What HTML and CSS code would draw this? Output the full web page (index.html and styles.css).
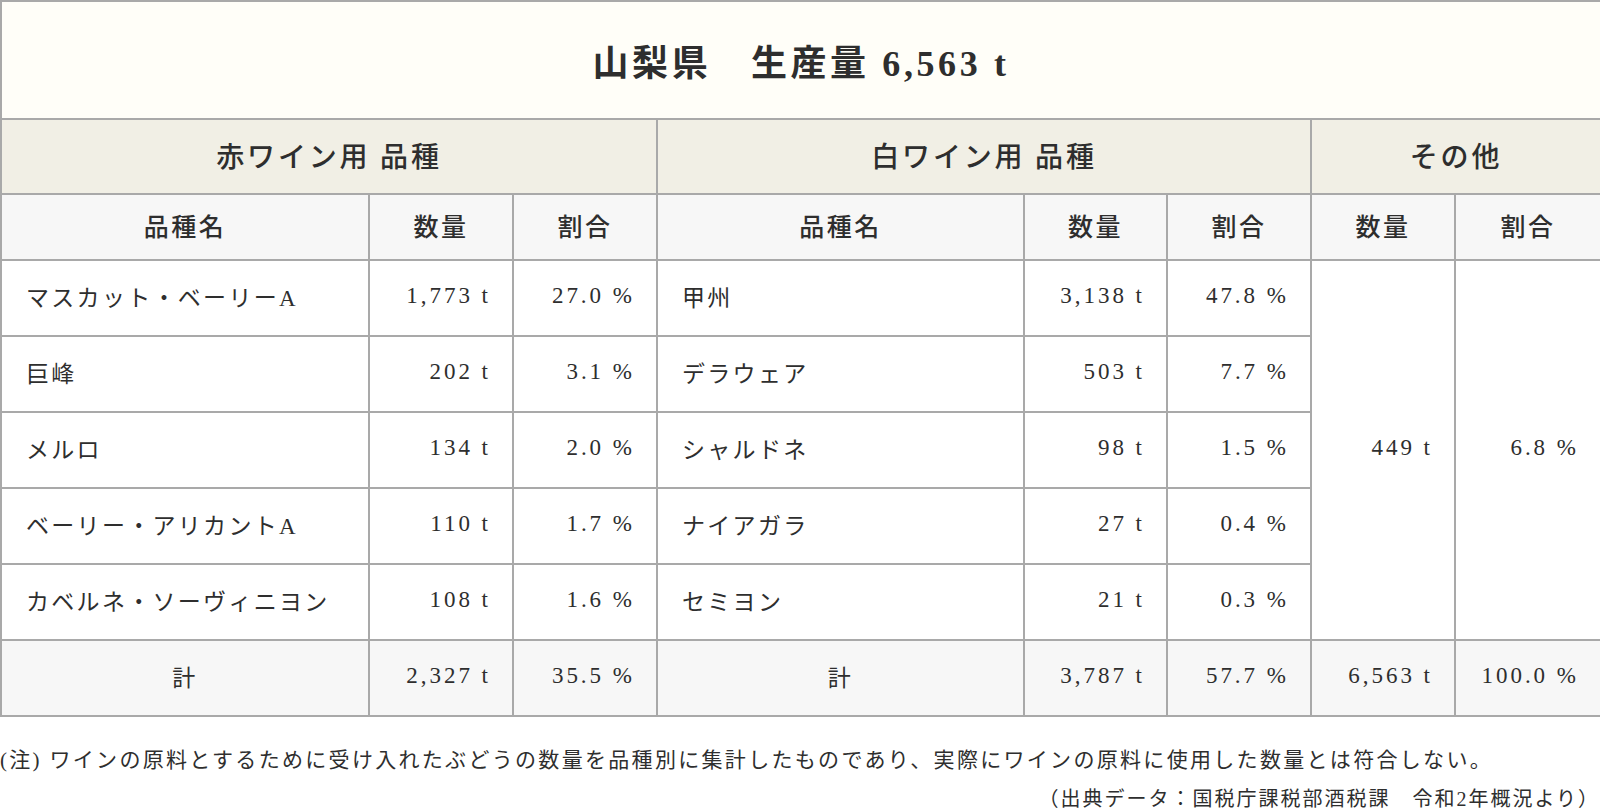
FILE: index.html
```html
<!DOCTYPE html>
<html lang="ja">
<head>
<meta charset="utf-8">
<title>山梨県 生産量</title>
<link rel="stylesheet" href="styles.css">
</head>
<body>
<table class="wine">
  <colgroup>
    <col class="c-name"><col class="c-num"><col class="c-num">
    <col class="c-name2"><col class="c-num2"><col class="c-num">
    <col class="c-num"><col class="c-last">
  </colgroup>
  <thead>
    <tr class="title-row"><th colspan="8">山梨県　生産量 6,563 t</th></tr>
    <tr class="group-row">
      <th colspan="3">赤ワイン用 品種</th>
      <th colspan="3">白ワイン用 品種</th>
      <th colspan="2">その他</th>
    </tr>
    <tr class="sub-row">
      <th>品種名</th><th>数量</th><th>割合</th>
      <th>品種名</th><th>数量</th><th>割合</th>
      <th>数量</th><th>割合</th>
    </tr>
  </thead>
  <tbody>
    <tr>
      <td class="name">マスカット・ベーリーA</td><td class="num">1,773 t</td><td class="num">27.0 %</td>
      <td class="name">甲州</td><td class="num">3,138 t</td><td class="num">47.8 %</td>
      <td class="num" rowspan="5">449 t</td><td class="num" rowspan="5">6.8 %</td>
    </tr>
    <tr>
      <td class="name">巨峰</td><td class="num">202 t</td><td class="num">3.1 %</td>
      <td class="name">デラウェア</td><td class="num">503 t</td><td class="num">7.7 %</td>
    </tr>
    <tr>
      <td class="name">メルロ</td><td class="num">134 t</td><td class="num">2.0 %</td>
      <td class="name">シャルドネ</td><td class="num">98 t</td><td class="num">1.5 %</td>
    </tr>
    <tr>
      <td class="name">ベーリー・アリカントA</td><td class="num">110 t</td><td class="num">1.7 %</td>
      <td class="name">ナイアガラ</td><td class="num">27 t</td><td class="num">0.4 %</td>
    </tr>
    <tr>
      <td class="name">カベルネ・ソーヴィニヨン</td><td class="num">108 t</td><td class="num">1.6 %</td>
      <td class="name">セミヨン</td><td class="num">21 t</td><td class="num">0.3 %</td>
    </tr>
    <tr class="total-row">
      <td class="center">計</td><td class="num">2,327 t</td><td class="num">35.5 %</td>
      <td class="center">計</td><td class="num">3,787 t</td><td class="num">57.7 %</td>
      <td class="num">6,563 t</td><td class="num">100.0 %</td>
    </tr>
  </tbody>
</table>
<p class="note">(注) ワインの原料とするために受け入れたぶどうの数量を品種別に集計したものであり、実際にワインの原料に使用した数量とは符合しない。</p>
<p class="source">（出典データ：国税庁課税部酒税課　令和2年概況より）</p>
</body>
</html>
```
FILE: styles.css
```css
html, body {
  margin: 0;
  padding: 0;
  background: #ffffff;
}
body {
  width: 1600px;
  font-family: "Liberation Serif", "Noto Sans CJK JP", serif;
  color: #2e2e2e;
}
.wine {
  width: 1600px;
  border-collapse: collapse;
  table-layout: fixed;
}
.c-name { width: 368px; }
.c-name2 { width: 367px; }
.c-num { width: 144px; }
.c-num2 { width: 143px; }
.c-last { width: 146px; }
.wine th, .wine td {
  border: 2px solid #a9a9a9;
  padding: 0 0 4px 0;
  letter-spacing: 0.1em;
}
.title-row th {
  height: 116px;
  padding-bottom: 0;
  background: #fffef8;
  font-size: 36px;
  font-weight: bold;
}
.group-row th {
  height: 69px;
  background: #f1efe5;
  font-size: 28px;
  font-weight: 500;
}
.sub-row th {
  height: 60px;
  background: #f7f7f7;
  font-size: 25px;
  font-weight: 500;
}
.wine td {
  height: 70px;
  font-size: 23px;
  background: #ffffff;
}
.wine td.name {
  text-align: left;
  padding-left: 24px;
}
.wine td.num {
  text-align: right;
  padding-right: 21px;
  letter-spacing: 0.13em;
}
.wine td.center {
  text-align: center;
}
.total-row td {
  background: #f7f7f7;
}
.note {
  margin: 28px 0 0 0;
  font-size: 21px;
  letter-spacing: 0.11em;
  line-height: 30px;
}
.source {
  margin: 9px 0 0 0;
  font-size: 20px;
  letter-spacing: 0.1em;
  line-height: 30px;
  text-align: right;
}
```
